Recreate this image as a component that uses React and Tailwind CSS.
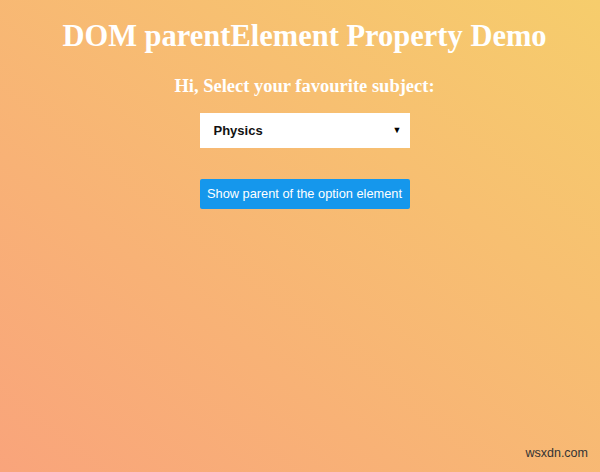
export default function App() {
  return (
    <div className="relative h-[472px] w-[600px] overflow-hidden bg-[linear-gradient(to_top_right,#f9a47b,#f6cd6c)]">
      <div className="flex flex-col items-center pl-[9px]">
        <h1 className="mt-[18px] text-[30.5px] font-bold leading-[36px] text-white [font-family:'Liberation_Serif',serif]">
          DOM parentElement Property Demo
        </h1>
        <h3 className="mt-[21px] text-[18.5px] font-bold leading-[22px] text-white [font-family:'Liberation_Serif',serif]">
          Hi, Select your favourite subject:
        </h3>
        <div className="mt-[16px] flex h-[35px] w-[210px] items-center justify-between bg-white pl-[14px] pr-[8px] [font-family:'Liberation_Sans',sans-serif]">
          <span className="text-[13px] font-bold text-[#111]">Physics</span>
          <span className="text-[9px] text-black">▼</span>
        </div>
        <button className="mt-[31px] h-[30px] w-[210px] rounded-[2px] bg-[#1597ec] text-[12.8px] text-white [font-family:'Liberation_Sans',sans-serif]">
          Show parent of the option element
        </button>
      </div>
      <div className="absolute bottom-[9px] right-[12px] text-[12.5px] text-[#333] [font-family:'Liberation_Sans',sans-serif]">
        wsxdn.com
      </div>
    </div>
  );
}
